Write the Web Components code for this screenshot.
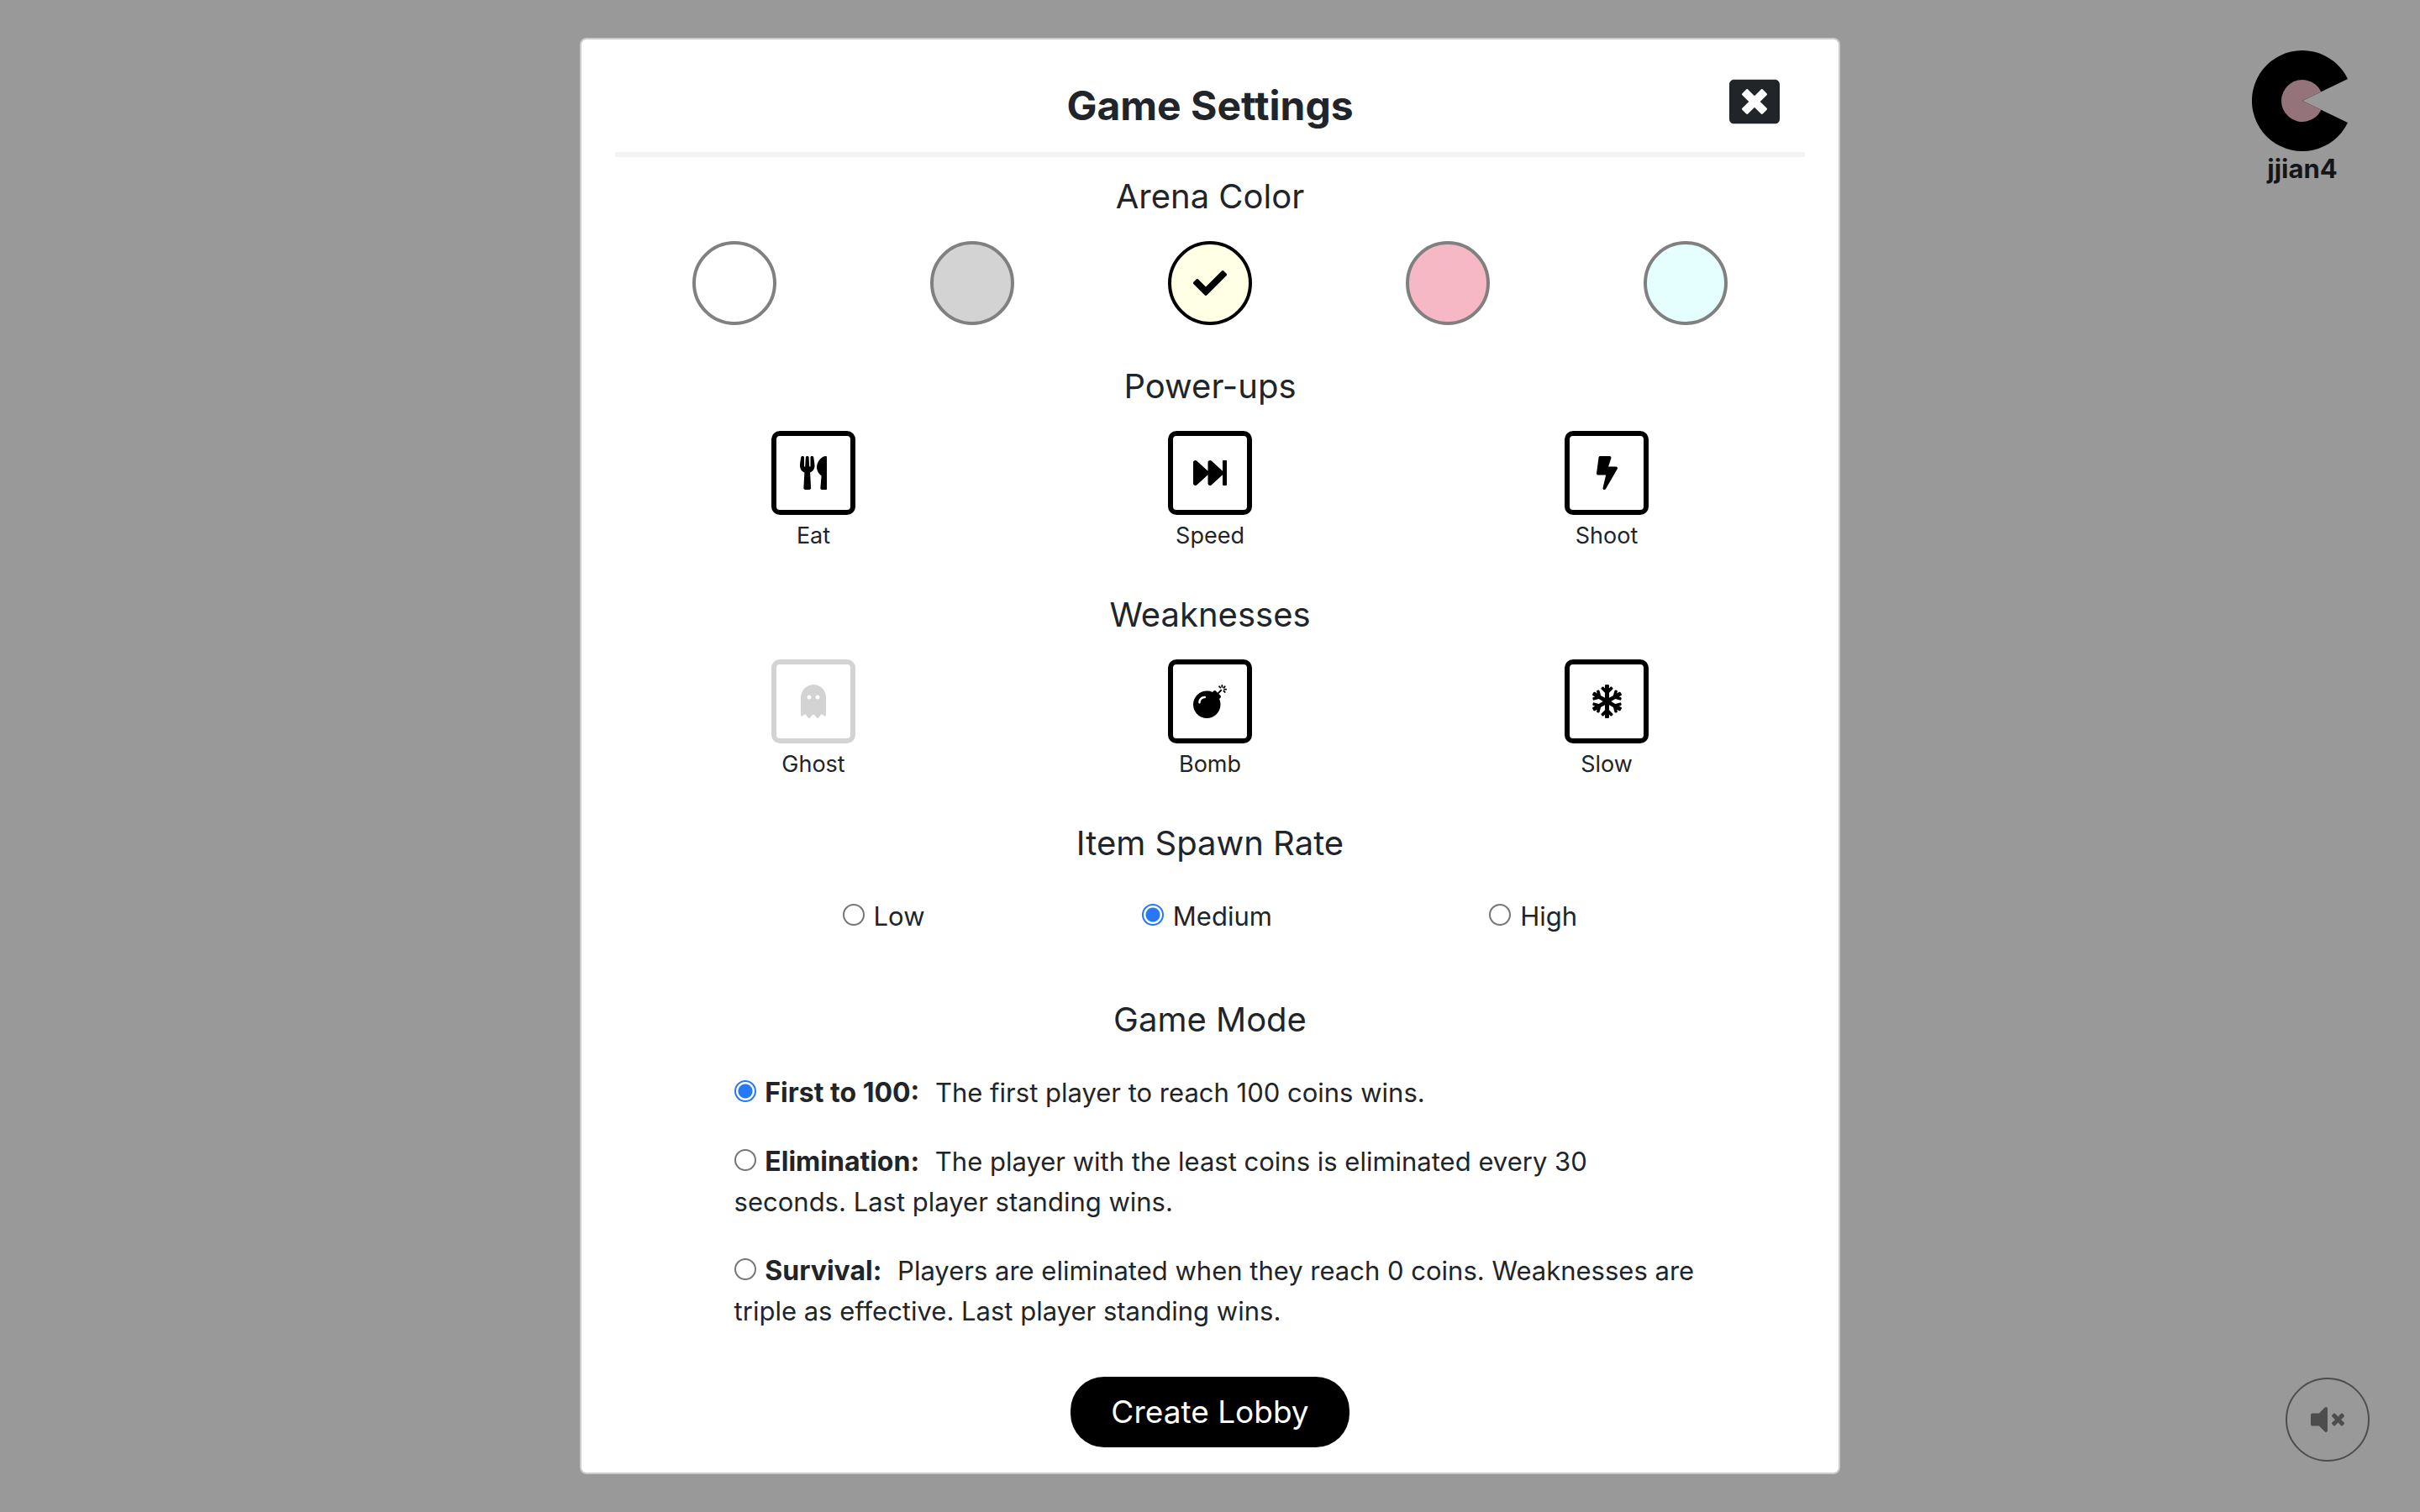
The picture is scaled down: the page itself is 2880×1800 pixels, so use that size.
<!DOCTYPE html>
<html lang="en">
<head>
<meta charset="utf-8">
<title>Game Settings</title>
<style>
  body { margin: 0; background: #999; color: #212529; font: 31px/48px Inter, "Liberation Sans", sans-serif; }
</style>
</head>
<body>
<game-page>
  <settings-dialog heading="Game Settings">
    <settings-section heading="Arena Color"><color-picker></color-picker></settings-section>
    <settings-section heading="Power-ups">
      <item-row>
        <item-toggle icon="utensils">Eat</item-toggle>
        <item-toggle icon="forward">Speed</item-toggle>
        <item-toggle icon="bolt">Shoot</item-toggle>
      </item-row>
    </settings-section>
    <settings-section heading="Weaknesses">
      <item-row>
        <item-toggle icon="ghost" off>Ghost</item-toggle>
        <item-toggle icon="bomb">Bomb</item-toggle>
        <item-toggle icon="snowflake">Slow</item-toggle>
      </item-row>
    </settings-section>
    <settings-section heading="Item Spawn Rate"><spawn-rate></spawn-rate></settings-section>
    <settings-section heading="Game Mode"><game-mode></game-mode></settings-section>
    <lobby-button slot="footer">Create Lobby</lobby-button>
  </settings-dialog>
  <player-badge slot="player">jjian4</player-badge>
  <mute-button slot="sound"></mute-button>
</game-page>
<script>
const ICONS = {
  close: [512, "M464 32H48C21.5 32 0 53.5 0 80v352c0 26.5 21.5 48 48 48h416c26.5 0 48-21.5 48-48V80c0-26.5-21.5-48-48-48zm-83.6 290.5c4.8 4.8 4.8 12.6 0 17.4l-40.5 40.5c-4.8 4.8-12.6 4.8-17.4 0L256 313.3l-66.5 67.1c-4.8 4.8-12.6 4.8-17.4 0l-40.5-40.5c-4.8-4.8-4.8-12.6 0-17.4l67.1-66.5-67.1-66.5c-4.8-4.8-4.8-12.6 0-17.4l40.5-40.5c4.8-4.8 12.6-4.8 17.4 0l66.5 67.1 66.5-67.1c4.8-4.8 12.6-4.8 17.4 0l40.5 40.5c4.8 4.8 4.8 12.6 0 17.4L313.3 256l67.1 66.5z"],
  check: [512, "M173.898 439.404l-166.4-166.4c-9.997-9.997-9.997-26.206 0-36.204l36.203-36.204c9.997-9.998 26.207-9.998 36.204 0L192 312.69 432.095 72.596c9.997-9.997 26.207-9.997 36.204 0l36.203 36.204c9.997 9.997 9.997 26.206 0 36.204l-294.4 294.401c-9.998 9.997-26.207 9.997-36.204-.001z"],
  utensils: [416, "M207.9 15.2c.8 4.7 16.1 94.5 16.1 128.8 0 52.3-27.8 89.6-68.9 104.6L168 486.7c.7 13.7-10.2 25.3-24 25.3H80c-13.7 0-24.7-11.5-24-25.3l12.9-238.1C27.7 233.6 0 196.2 0 144 0 109.6 15.3 19.9 16.1 15.2 19.3-5.1 61.4-5.4 64 16.3v141.2c1.3 3.4 15.1 3.2 16 0 1.4-25.3 7.9-139.2 8-141.8 3.3-20.8 44.7-20.8 47.9 0 .2 2.7 6.6 116.5 8 141.8.9 3.2 14.8 3.4 16 0V16.3c2.6-21.6 44.8-21.4 47.9-1.1zm119.2 285.7l-15 185.1c-1.2 14 9.9 26 23.9 26h56c13.3 0 24-10.7 24-24V24c0-13.2-10.7-24-24-24-82.5 0-221.4 178.5-64.9 300.9z"],
  forward: [512, "M512 76v360c0 6.6-5.4 12-12 12h-40c-6.6 0-12-5.4-12-12V284.1L276.5 440.6c-20.6 17.2-52.5 2.8-52.5-24.6V284.1L52.5 440.6C31.9 457.8 0 443.4 0 416V96c0-27.4 31.9-41.7 52.5-24.6L224 226.8V96c0-27.4 31.9-41.7 52.5-24.6L448 226.8V76c0-6.6 5.4-12 12-12h40c6.6 0 12 5.4 12 12z"],
  bolt: [320, "M296 160H180.6l42.6-129.8C227.2 15 215.7 0 200 0H56C44 0 33.8 8.9 32.2 20.8l-32 240C-1.7 275.2 9.5 288 24 288h118.7L96.6 482.5c-3.6 15.2 8 29.5 23.3 29.5 8.4 0 16.4-4.4 20.8-12l176-304c9.3-15.9-2.2-36-20.7-36z"],
  ghost: [384, "M186.1.09C81.01 3.24 0 94.92 0 200.05v263.92c0 14.26 17.23 21.39 27.31 11.31l24.92-18.53c6.66-4.95 16-3.99 21.51 2.21l42.95 48.35c6.25 6.25 16.38 6.25 22.63 0l40.72-45.85c6.37-7.17 17.56-7.17 23.92 0l40.72 45.85c6.25 6.25 16.38 6.25 22.63 0l42.95-48.35c5.51-6.2 14.85-7.17 21.51-2.21l24.92 18.53c10.08 10.08 27.31 2.94 27.31-11.31V192C384 84 294.83-3.17 186.1.09zM128 224c-17.67 0-32-14.33-32-32s14.33-32 32-32 32 14.33 32 32-14.33 32-32 32zm128 0c-17.67 0-32-14.33-32-32s14.33-32 32-32 32 14.33 32 32-14.33 32-32 32z"],
  bomb: [512, "M440.5 88.5l-52 52L415 167c9.4 9.4 9.4 24.6 0 33.9l-17.4 17.4c11.8 26.1 18.4 55.1 18.4 85.6 0 114.9-93.1 208-208 208S0 418.9 0 304 93.1 96 208 96c30.5 0 59.5 6.6 85.6 18.4L311 97c9.4-9.4 24.6-9.4 33.9 0l26.5 26.5 52-52 17.1 17zM500 60h-24c-6.6 0-12 5.4-12 12s5.4 12 12 12h24c6.6 0 12-5.4 12-12s-5.4-12-12-12zM440 0c-6.6 0-12 5.4-12 12v24c0 6.6 5.4 12 12 12s12-5.4 12-12V12c0-6.6-5.4-12-12-12zm33.9 55l17-17c4.7-4.7 4.7-12.3 0-17-4.7-4.7-12.3-4.7-17 0l-17 17c-4.7 4.7-4.7 12.3 0 17 4.8 4.7 12.4 4.7 17 0zm-67.8 0c4.7 4.7 12.3 4.7 17 0 4.7-4.7 4.7-12.3 0-17l-17-17c-4.7-4.7-12.3-4.7-17 0-4.7 4.7-4.7 12.3 0 17l17 17zm67.8 34c-4.7-4.7-12.3-4.7-17 0-4.7 4.7-4.7 12.3 0 17l17 17c4.7 4.7 12.3 4.7 17 0 4.7-4.7 4.7-12.3 0-17l-17-17zM112 272c0-35.3 28.7-64 64-64 8.8 0 16-7.2 16-16s-7.2-16-16-16c-52.9 0-96 43.1-96 96 0 8.8 7.2 16 16 16s16-7.2 16-16z"],
  snowflake: [448, "M440.3 345.2l-33.8-19.5 26-7c8.2-2.2 13.1-10.7 10.9-18.9l-4-14.9c-2.2-8.2-10.7-13.1-18.9-10.9l-70.8 19-63.9-37 63.8-36.9 70.8 19c8.2 2.2 16.7-2.7 18.9-10.9l4-14.9c2.2-8.2-2.7-16.7-10.9-18.9l-26-7 33.8-19.5c7.4-4.3 9.9-13.7 5.7-21.1L430.4 119c-4.3-7.4-13.7-9.9-21.1-5.7l-33.8 19.5 7-26c2.2-8.2-2.7-16.7-10.9-18.9l-14.9-4c-8.2-2.2-16.7 2.7-18.9 10.9l-19 70.8-62.8 36.2v-77.5l53.7-53.7c6.2-6.2 6.2-16.4 0-22.6l-11.3-11.3c-6.2-6.2-16.4-6.2-22.6 0L256 56.4V16c0-8.8-7.2-16-16-16h-32c-8.8 0-16 7.2-16 16v40.4l-19.7-19.7c-6.2-6.2-16.4-6.2-22.6 0L138.3 48c-6.3 6.2-6.3 16.4 0 22.6l53.7 53.7v77.5l-62.8-36.2-19-70.8c-2.2-8.2-10.7-13.1-18.9-10.9l-14.9 4c-8.2 2.2-13.1 10.7-10.9 18.9l7 26-33.8-19.5c-7.4-4.3-16.8-1.7-21.1 5.7L2.1 145.7c-4.3 7.4-1.7 16.8 5.7 21.1l33.8 19.5-26 7c-8.3 2.2-13.2 10.7-11 19l4 14.9c2.2 8.2 10.7 13.1 18.9 10.9l70.8-19 63.8 36.9-63.8 36.9-70.8-19c-8.2-2.2-16.7 2.7-18.9 10.9l-4 14.9c-2.2 8.2 2.7 16.7 10.9 18.9l26 7-33.8 19.6c-7.4 4.3-9.9 13.7-5.7 21.1l15.5 26.8c4.3 7.4 13.7 9.9 21.1 5.7l33.8-19.5-7 26c-2.2 8.2 2.7 16.7 10.9 18.9l14.9 4c8.2 2.2 16.7-2.7 18.9-10.9l19-70.8 62.8-36.2v77.5l-53.7 53.7c-6.3 6.2-6.3 16.4 0 22.6l11.3 11.3c6.2 6.2 16.4 6.2 22.6 0l19.7-19.7V496c0 8.8 7.2 16 16 16h32c8.8 0 16-7.2 16-16v-40.4l19.7 19.7c6.2 6.2 16.4 6.2 22.6 0l11.3-11.3c6.2-6.2 6.2-16.4 0-22.6L256 387.7v-77.5l62.8 36.2 19 70.8c2.2 8.2 10.7 13.1 18.9 10.9l14.9-4c8.2-2.2 13.1-10.7 10.9-18.9l-7-26 33.8 19.5c7.4 4.3 16.8 1.7 21.1-5.7l15.5-26.8c4.3-7.3 1.8-16.8-5.6-21z"],
  mute: [512, "M215.03 71.05L126.06 160H24c-13.26 0-24 10.74-24 24v144c0 13.25 10.74 24 24 24h102.06l88.97 88.95c15.03 15.03 40.97 4.47 40.97-16.97V88.02c0-21.46-25.96-31.98-40.97-16.97zM461.64 256l45.64-45.64c6.3-6.3 6.3-16.52 0-22.82l-22.82-22.82c-6.3-6.3-16.52-6.3-22.82 0L416 210.36l-45.64-45.64c-6.3-6.3-16.52-6.3-22.82 0l-22.82 22.82c-6.3 6.3-6.3 16.52 0 22.82L370.36 256l-45.63 45.63c-6.3 6.3-6.3 16.52 0 22.82l22.82 22.82c6.3 6.3 16.52 6.3 22.82 0L416 301.64l45.64 45.64c6.3 6.3 16.52 6.3 22.82 0l22.82-22.82c6.3-6.3 6.3-16.52 0-22.82L461.64 256z"]
};

const BUTTON = "button { display: flex; align-items: center; justify-content: center; box-sizing: border-box; margin: 0; padding: 0; border: 0; background: none; color: inherit; font: inherit; cursor: pointer; }";

const RADIO = `
  input { appearance: none; box-sizing: border-box; width: 26px; height: 26px; margin: 0 2px 0 0; border: 2px solid #767676; border-radius: 50%; background: #fff; vertical-align: baseline; }
  input:checked { border-color: #2678f6; background: radial-gradient(circle, #2678f6 8px, #fff 9px); }`;

function define(name, css, html) {
  customElements.define(name, class extends HTMLElement {
    constructor() {
      super();
      const body = typeof html === "function" ? html(this) : html;
      this.attachShadow({ mode: "open" }).innerHTML = `<style>${css}</style>${body}`;
    }
  });
}

define("fa-icon",
  ":host { display: block; } svg { display: block; height: var(--icon-size, 40px); fill: currentColor; }",
  el => { const [w, d] = ICONS[el.getAttribute("name")]; return `<svg viewBox="0 0 ${w} 512" aria-hidden="true"><path d="${d}"/></svg>`; });

define("game-page", `
  :host { display: grid; grid-template-columns: 1fr minmax(0, 1500px) 1fr; min-height: 100vh; box-sizing: border-box; }
  main { grid-column: 2; align-self: center; }
  aside { display: flex; flex-direction: column; justify-content: space-between; align-items: flex-end; padding: 60px; }`,
  `<main><slot></slot></main><aside><slot name="player"></slot><slot name="sound"></slot></aside>`);

define("settings-dialog", `
  :host { display: block; box-sizing: border-box; padding: 0 40px 30px; background: #fff; border: 2px solid #cbcbcb; border-radius: 8px; }
  header { display: grid; grid-template-columns: 1fr auto 1fr; padding: 44px 30px 20px; border-bottom: 6px solid #f3f3f3; }
  h1 { grid-column: 2; margin: 0; font-size: 48px; line-height: 70px; font-weight: 700; }
  ${BUTTON}
  button { justify-self: end; align-self: start; --icon-size: 60px; }
  .body { display: flex; flex-direction: column; gap: 46px; padding-top: 20px; }
  footer { display: flex; justify-content: center; padding-top: 54px; }`,
  el => `<header><h1>${el.getAttribute("heading")}</h1><button aria-label="Close"><fa-icon name="close"></fa-icon></button></header>
  <div class="body"><slot></slot></div><footer><slot name="footer"></slot></footer>`);

define("settings-section", `
  :host { display: block; }
  h2 { margin: 0 0 26px; font-size: 40px; line-height: 54px; font-weight: 400; text-align: center; }`,
  el => `<section><h2>${el.getAttribute("heading")}</h2><slot></slot></section>`);

define("color-picker", `
  :host { display: flex; }
  div { flex: 1; display: flex; justify-content: center; }
  ${BUTTON}
  button { width: 100px; height: 100px; border: 4px solid #808080; border-radius: 50%; color: #000; }
  button[aria-pressed=true] { border-color: #000; }`,
  [["White", "#ffffff"], ["Gray", "#d3d3d3"], ["Yellow", "#ffffe5"], ["Pink", "#f5b8c4"], ["Cyan", "#e5ffff"]]
    .map(([n, c]) => `<div><button aria-label="${n}" aria-pressed="${n === "Yellow"}" style="background:${c}">${n === "Yellow" ? '<fa-icon name="check"></fa-icon>' : ""}</button></div>`).join(""));

define("item-row", ":host { display: flex; } ::slotted(*) { flex: 1; }", "<slot></slot>");

define("item-toggle", `
  :host { display: flex; flex-direction: column; align-items: center; gap: 4px; }
  ${BUTTON}
  button { width: 100px; height: 100px; border: 6px solid; border-radius: 10px; color: #000; }
  :host([off]) button { color: #d3d3d3; }
  label { font-size: 27px; line-height: 42px; }`,
  el => `<button id="toggle" aria-pressed="${!el.hasAttribute("off")}"><fa-icon name="${el.getAttribute("icon")}"></fa-icon></button><label for="toggle"><slot></slot></label>`);

define("spawn-rate", `
  :host { display: flex; justify-content: space-around; width: 80%; margin: 0 auto; padding: 10px 0 26px; }
  ${RADIO}`,
  ["Low", "Medium", "High"].map(n => `<label><input type="radio" name="rate"${n === "Medium" ? " checked" : ""}> ${n}</label>`).join(""));

define("game-mode", `
  :host { display: flex; flex-direction: column; gap: 34px; padding: 10px 9% 0 10%; }
  b { margin-right: 10px; font-size: 32px; }
  ${RADIO}`,
  [["First to 100:", "The first player to reach 100 coins wins."],
   ["Elimination:", "The player with the least coins is eliminated every 30 seconds. Last player standing wins."],
   ["Survival:", "Players are eliminated when they reach 0 coins. Weaknesses are triple as effective. Last player standing wins."]]
    .map(([n, t], i) => `<label><input type="radio" name="mode"${i ? "" : " checked"}> <b>${n}</b> ${t}</label>`).join(""));

define("lobby-button", `
  :host { display: block; }
  ${BUTTON}
  button { padding: 12px 48px; border-radius: 40px; background: #000; color: #fff; font-size: 37px; line-height: 60px; }`,
  "<button><slot></slot></button>");

define("player-badge", `
  :host { display: flex; flex-direction: column; align-items: center; width: 120px; margin-right: 20px; color: #14161a; font-weight: 700; line-height: 42px; }
  svg { display: block; width: 120px; height: 120px; }`,
  `<svg viewBox="-60 -60 120 120" aria-hidden="true"><path d="M0 0 54-26A60 60 0 1 0 54 26Z"/><path fill="#95737a" d="M0 0 22.5-10.8A25 25 0 1 0 22.5 10.8Z"/></svg><slot></slot>`);

define("mute-button", `
  :host { display: block; }
  ${BUTTON}
  button { width: 100px; height: 100px; border: 2px solid; border-radius: 50%; color: #4d4d4d; }`,
  `<button aria-label="Unmute"><fa-icon name="mute"></fa-icon></button>`);
</script>
</body>
</html>
